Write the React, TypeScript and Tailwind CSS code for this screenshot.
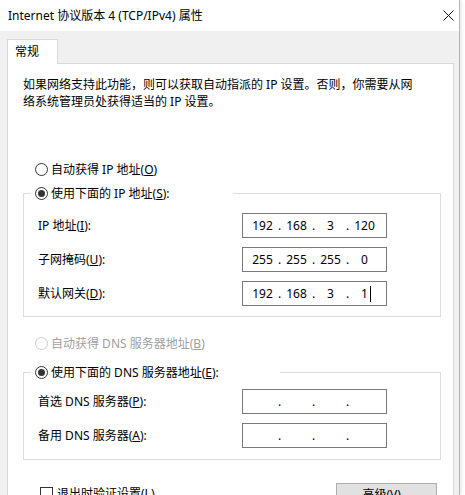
import type { ReactNode } from "react"

const font = "font-['Noto_Sans','Noto_Sans_CJK_SC',sans-serif]"

function Radio({ checked, disabled }: { checked?: boolean; disabled?: boolean }) {
  return (
    <span
      className={`flex h-[13px] w-[13px] shrink-0 items-center justify-center rounded-full border bg-white ${
        disabled ? "border-[#cccccc]" : "border-[#333333]"
      }`}
    >
      {checked && <span className="h-[7px] w-[7px] rounded-full bg-[#333333]" />}
    </span>
  )
}

function RadioRow({
  children,
  checked,
  disabled,
}: {
  children: ReactNode
  checked?: boolean
  disabled?: boolean
}) {
  return (
    <div className={`flex h-[17px] items-center gap-[3px] ${disabled ? "text-[#a0a0a0]" : "text-black"}`}>
      <Radio checked={checked} disabled={disabled} />
      <span>{children}</span>
    </div>
  )
}

function IpBox({ parts, caret }: { parts: string[]; caret?: boolean }) {
  return (
    <div className="flex h-[25px] w-[145px] items-center border border-[#7a7a7a] bg-white pl-[6px] text-[12px]">
      {parts.map((p, i) => (
        <div key={i} className="flex items-center">
          <span className="relative w-[27px] text-center">
            {p}
            {caret && i === 3 && <span className="absolute top-[1px] ml-[2px] h-[16px] w-px bg-black" />}
          </span>
          {i < 3 && <span className="w-[7px] text-center">.</span>}
        </div>
      ))}
    </div>
  )
}

function Group({
  legend,
  legendWidth,
  rows,
  padTop,
  padBottom,
}: {
  legend: ReactNode
  legendWidth: string
  rows: { label: ReactNode; parts: string[]; caret?: boolean }[]
  padTop: string
  padBottom: string
}) {
  return (
    <fieldset className={`ml-[15px] w-[418px] border border-[#dcdcdc] pl-[14px] ${padTop} ${padBottom}`}>
      <legend className={`-ml-[7px] bg-white pl-[4px] ${legendWidth}`}>{legend}</legend>
      <div className="grid grid-cols-[204px_145px] items-center gap-y-[9px]">
        {rows.map((r, i) => (
          <div key={i} className="contents">
            <span>{r.label}</span>
            <IpBox parts={r.parts} caret={r.caret} />
          </div>
        ))}
      </div>
    </fieldset>
  )
}

const U = ({ children }: { children: string }) => <span className="underline">{children}</span>

export default function App() {
  return (
    <div className={`h-[495px] w-[465px] overflow-hidden bg-white text-[12px] leading-[17px] text-black ${font}`}>
      <div className="w-[460px] border-r border-[#b4b4b4] shadow-[2px_0_3px_rgba(0,0,0,0.08)]">
        <div className="flex h-[31px] items-center justify-between bg-white pl-[8px] pr-[5px]">
          <span>Internet 协议版本 4 (TCP/IPv4) 属性</span>
          <svg width="11" height="11" viewBox="0 0 11 11">
            <path d="M0.5 0.5 L10.5 10.5 M10.5 0.5 L0.5 10.5" stroke="#111" strokeWidth="1" />
          </svg>
        </div>
        <div className="h-[464px] bg-[#f0f0f0] pl-[7px] pr-[5px] pt-[8px]">
          <div className="relative z-10 -mb-px flex h-[25px] w-[51px] items-center border border-b-0 border-[#d9d9d9] bg-white pl-[7px] pb-[2px]">
            常规
          </div>
          <div className="h-[500px] w-[447px] border border-[#d9d9d9] bg-white pt-[12px]">
            <p className="px-[15px]">
              如果网络支持此功能，则可以获取自动指派的 IP 设置。否则，你需要从网
              <br />
              络系统管理员处获得适当的 IP 设置。
            </p>
            <div className="ml-[27px] mt-[51px]">
              <RadioRow>
                自动获得 IP 地址(<U>O</U>)
              </RadioRow>
            </div>
            <div className="mt-[7px]">
              <Group
                legend={
                  <RadioRow checked>
                    使用下面的 IP 地址(<U>S</U>):
                  </RadioRow>
                }
                legendWidth="w-[202px]"
                padTop="pt-[11px]"
                padBottom="pb-[10px]"
                rows={[
                  { label: <>IP 地址(<U>I</U>):</>, parts: ["192", "168", "3", "120"] },
                  { label: <>子网掩码(<U>U</U>):</>, parts: ["255", "255", "255", "0"] },
                  { label: <>默认网关(<U>D</U>):</>, parts: ["192", "168", "3", "1"], caret: true },
                ]}
              />
            </div>
            <div className="ml-[27px] mt-[18px]">
              <RadioRow disabled>
                自动获得 DNS 服务器地址(<U>B</U>)
              </RadioRow>
            </div>
            <div className="mt-[12px]">
              <Group
                legend={
                  <RadioRow checked>
                    使用下面的 DNS 服务器地址(<U>E</U>):
                  </RadioRow>
                }
                legendWidth="w-[249px]"
                padTop="pt-[8px]"
                padBottom="pb-[11px]"
                rows={[
                  { label: <>首选 DNS 服务器(<U>P</U>):</>, parts: ["", "", "", ""] },
                  { label: <>备用 DNS 服务器(<U>A</U>):</>, parts: ["", "", "", ""] },
                ]}
              />
            </div>
            <div className="mt-[23px] flex items-start">
              <div className="ml-[32px] mt-[2px] flex items-center gap-[4px]">
                <span className="h-[13px] w-[13px] border border-[#333333] bg-white" />
                <span>
                  退出时验证设置(<U>L</U>)
                </span>
              </div>
              <button className="ml-auto mr-[16px] flex h-[23px] w-[101px] items-center justify-center border border-[#adadad] bg-[#e1e1e1]">
                高级(<U>V</U>)...
              </button>
            </div>
          </div>
        </div>
      </div>
    </div>
  )
}
